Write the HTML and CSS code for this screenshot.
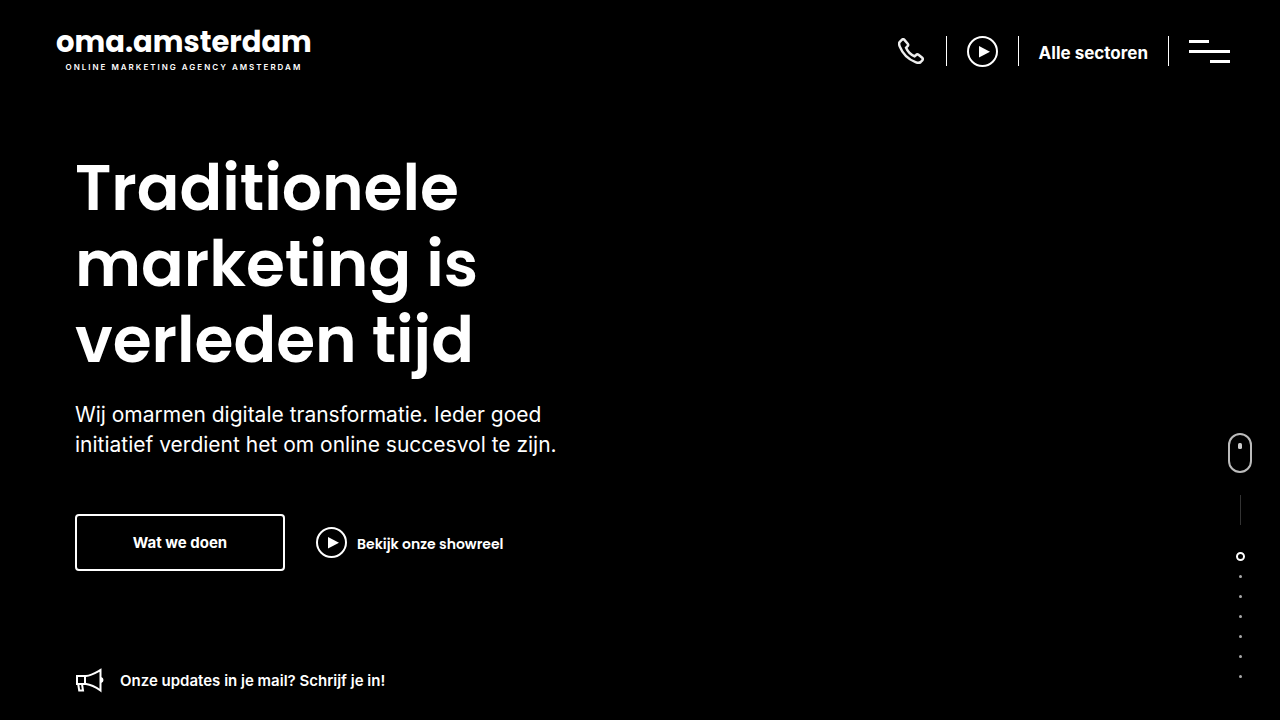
FILE: index.html
```html
<!DOCTYPE html>
<html lang="nl">
<head>
<meta charset="utf-8">
<meta name="viewport" content="width=device-width, initial-scale=1">
<title>oma.amsterdam</title>
<link rel="stylesheet" href="styles.css">
</head>
<body>
<header class="header">
  <a class="logo" href="#">
    <span class="logo-name">oma.amsterdam</span>
    <span class="logo-tagline">ONLINE MARKETING AGENCY AMSTERDAM</span>
  </a>
  <nav class="nav">
    <a class="nav-item" href="#" aria-label="Bel ons">
      <svg class="phone" viewBox="0 0 26 26" aria-hidden="true"><path d="M6.200 1.700C5.500 1 4.700 1.100 4 1.700L1.800 3.900C.8 4.900 1 6.600 1.700 8.400C4.500 15.500 10 21.200 17.500 24.200C19.800 25.100 21.500 25.200 22.700 24L24.300 22.300C25.100 21.500 25 20.500 24.200 19.800L20.500 16.800C19.700 16.200 18.800 16.300 18.100 17L16.600 18.300C13 16.700 9.600 13.300 8.100 9.700L9.600 8.200C10.300 7.500 10.300 6.500 9.700 5.700Z"/></svg>
    </a>
    <button class="nav-item" type="button" aria-label="Speel video af">
      <svg class="play" viewBox="0 0 31 31" aria-hidden="true"><circle cx="15.500" cy="15.500" r="14.500"/><path d="M12 10V21.500L23 15.700Z"/></svg>
    </button>
    <a class="nav-item sectors" href="#">Alle sectoren</a>
    <button class="nav-item menu" type="button" aria-label="Menu">
      <span class="bar"></span><span class="bar bar-wide"></span><span class="bar bar-end"></span>
    </button>
  </nav>
</header>

<main class="hero">
  <h1 class="title">Traditionele<br>marketing is<br>verleden tijd</h1>
  <p class="intro">Wij omarmen digitale transformatie. Ieder goed<br>initiatief verdient het om online succesvol te zijn.</p>
  <div class="actions">
    <a class="cta" href="#">Wat we doen</a>
    <button class="showreel" type="button">
      <svg class="play" viewBox="0 0 31 31" aria-hidden="true"><circle cx="15.500" cy="15.500" r="14.500"/><path d="M12 10V21.500L23 15.700Z"/></svg>
      <span>Bekijk onze showreel</span>
    </button>
  </div>
  <a class="updates" href="#">
    <svg class="megaphone" viewBox="0 0 29 26" aria-hidden="true"><path d="M2 9H11C16 8.500 20 6 25.500 3V23.500C20 19.500 16 17.500 11 17H2ZM10 9V17M3.200 17L4.200 23.500H8L7 17M26 11C28 12 28 14 26 15"/></svg>
    <span>Onze updates in je mail? Schrijf je in!</span>
  </a>
</main>

<nav class="rail" aria-label="Secties">
  <svg class="mouse" viewBox="0 0 24 40" aria-hidden="true"><rect x="1" y="1" width="22" height="38" rx="11"/><rect class="wheel" x="10" y="10" width="4" height="6" rx="1.500"/></svg>
  <span class="rail-line"></span>
  <ul class="dots">
    <li><a class="dot current" href="#" aria-label="Sectie 1"></a></li>
    <li><a class="dot" href="#" aria-label="Sectie 2"></a></li>
    <li><a class="dot" href="#" aria-label="Sectie 3"></a></li>
    <li><a class="dot" href="#" aria-label="Sectie 4"></a></li>
    <li><a class="dot" href="#" aria-label="Sectie 5"></a></li>
    <li><a class="dot" href="#" aria-label="Sectie 6"></a></li>
    <li><a class="dot" href="#" aria-label="Sectie 7"></a></li>
  </ul>
</nav>
</body>
</html>
```
FILE: styles.css
```css
* { box-sizing: border-box; }

body {
  margin: 0;
  min-height: 100vh;
  background: #000;
  color: #fff;
  font-family: Inter, "Liberation Sans", sans-serif;
}

a { color: inherit; text-decoration: none; }

button {
  padding: 0;
  border: 0;
  background: none;
  color: inherit;
  font: inherit;
  cursor: pointer;
}

svg { display: block; fill: none; stroke: #fff; stroke-width: 2; }

.header {
  display: flex;
  justify-content: space-between;
  align-items: flex-start;
  padding: 24px 50px 0 56px;
}

.logo {
  display: flex;
  flex-direction: column;
  align-items: center;
}

.logo-name {
  font-family: Poppins, Inter, sans-serif;
  font-size: 29px;
  line-height: 36px;
  font-weight: 700;
}

.logo-tagline {
  font-size: 8px;
  line-height: 14px;
  font-weight: 600;
  letter-spacing: 2px;
}

.nav {
  display: flex;
  align-items: center;
  padding-top: 12px;
}

.nav-item {
  display: flex;
  align-items: center;
  height: 30px;
  padding: 0 20px;
  border-left: 1px solid #fff;
}

.nav-item:first-child { padding-left: 0; padding-right: 22px; border-left: 0; }
.nav-item:last-child { padding-right: 0; }

.phone { width: 26px; height: 26px; stroke: #eee; stroke-width: 2.5; }
.play { width: 31px; height: 31px; }
.play path { fill: #fff; stroke: none; }

.sectors { font-size: 17px; font-weight: 700; padding-top: 4px; }

.menu {
  flex-direction: column;
  align-items: flex-start;
  justify-content: center;
  gap: 7px;
}

.bar { width: 20px; height: 3px; background: #fff; }
.bar-wide { width: 41px; }
.bar-end { align-self: flex-end; }

.hero { padding: 76px 75px 24px; }

.title {
  margin: 0;
  font-family: Poppins, Inter, sans-serif;
  font-size: 63px;
  line-height: 76px;
  font-weight: 600;
}

.intro {
  margin: 22px 0 0;
  font-size: 21px;
  line-height: 30px;
}

.actions {
  display: flex;
  align-items: center;
  gap: 31px;
  margin-top: 54px;
}

.cta {
  width: 210px;
  padding: 17px 16px;
  border: 2px solid #fff;
  border-radius: 4px;
  font-size: 15px;
  line-height: 19px;
  font-weight: 700;
  text-align: center;
}

.showreel {
  display: flex;
  align-items: center;
  gap: 10px;
  font-family: Poppins, Inter, sans-serif;
  font-size: 14px;
  font-weight: 600;
}

.showreel span { padding-top: 3px; }

.updates {
  display: inline-flex;
  align-items: center;
  gap: 16px;
  margin-top: 96px;
  font-size: 15px;
  font-weight: 600;
}

.megaphone { width: 29px; height: 26px; }

.rail {
  position: fixed;
  right: 28px;
  bottom: 34px;
  display: flex;
  flex-direction: column;
  align-items: center;
}

.mouse { width: 24px; height: 40px; stroke: #bbb; }
.wheel { fill: #ccc; stroke: none; }

.rail-line { width: 1px; height: 30px; margin: 22px 0 21px; background: #333; }

.dots { margin: 0; padding: 0; list-style: none; }
.dots li { display: grid; place-items: center; width: 20px; height: 20px; }

.dot { width: 3px; height: 3px; border-radius: 50%; background: #aaa; }

.current {
  width: 9px;
  height: 9px;
  border: 2px solid #fff;
  background: none;
}
```
